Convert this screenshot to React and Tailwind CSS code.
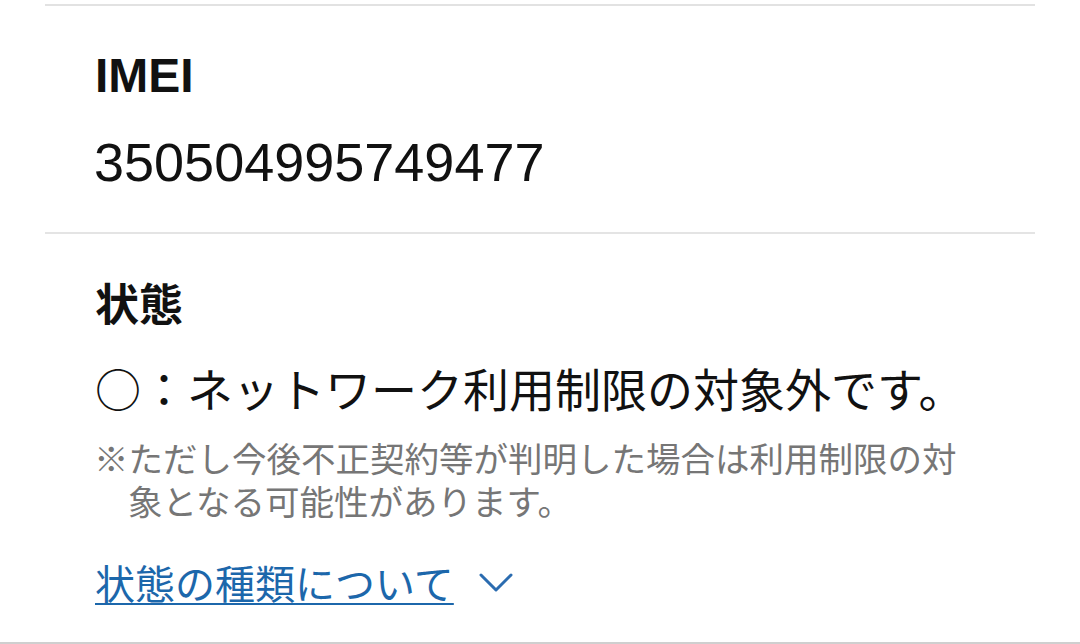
export default function App() {
  const jp = { fontFamily: '"Noto Sans CJK JP", "Noto Sans", sans-serif' };
  return (
    <div className="w-[1080px] h-[644px] bg-white flex flex-col overflow-hidden">
      <div className="px-[45px] flex flex-col">
        <div className="mt-[4px] h-[2px] bg-[#e2e2e2]" />
        <div
          className="mt-[41px] px-[50px] text-[48px] leading-[57.6px] font-bold text-[#111]"
          style={{ fontFamily: '"Liberation Sans", Arial, sans-serif' }}
        >
          IMEI
        </div>
        <div
          className="mt-[25px] px-[49px] text-[54px] leading-[64px] text-[#111]"
          style={{ fontFamily: '"Liberation Sans", Arial, sans-serif' }}
        >
          350504995749477
        </div>
        <div className="mt-[38px] h-[2px] bg-[#e4e4e4]" />
        <div className="mt-[38px] px-[50px] text-[44px] leading-[60px] font-bold text-[#111]" style={jp}>
          状態
        </div>
        <div className="mt-[25px] px-[50px] text-[46px] leading-[60px] text-[#111]" style={jp}>
          ○：ネットワーク利用制限の対象外です。
        </div>
        <div className="mt-[19px] px-[49px]">
          <p className="pl-[34px] -indent-[34px] text-[34.5px] leading-[43px] text-[#767676] w-[880px]" style={jp}>
            ※ただし今後不正契約等が判明した場合は利用制限の対象となる可能性があります。
          </p>
        </div>
        <div className="mt-[32px] px-[50px] flex items-center gap-[25px]">
          <a
            className="text-[40px] leading-[56px] text-[#1c67ab] underline decoration-[2px] underline-offset-[4px]"
            style={jp}
          >
            状態の種類について
          </a>
          <svg width="34" height="22" viewBox="0 0 34 22" className="mt-[2px]">
            <path d="M2 3 L17 18 L32 3" fill="none" stroke="#2b6cb0" strokeWidth="3" strokeLinecap="round" strokeLinejoin="round" />
          </svg>
        </div>
      </div>
      <div className="mt-auto h-[2px] bg-[#cfcfcf]" />
    </div>
  );
}
